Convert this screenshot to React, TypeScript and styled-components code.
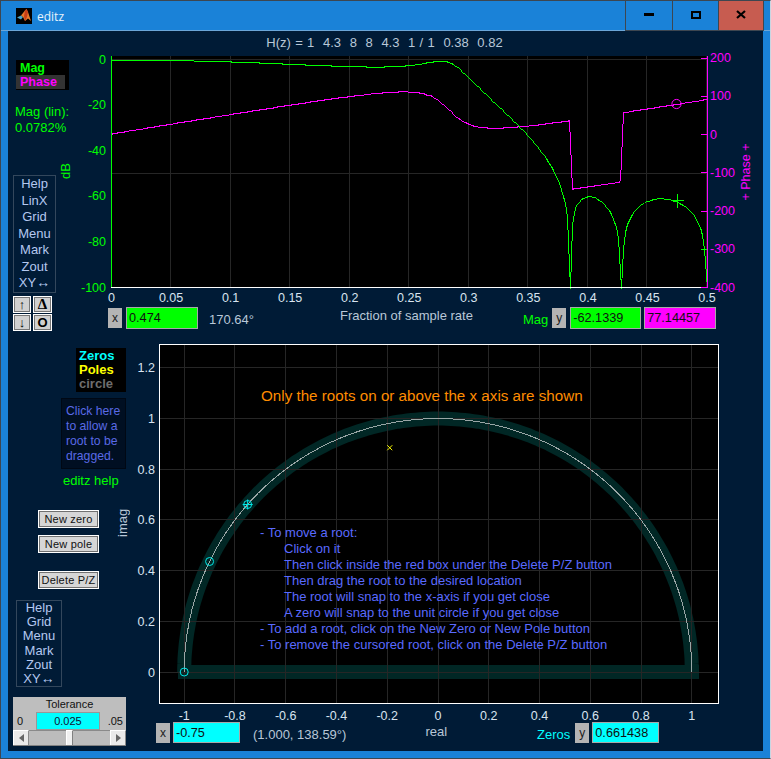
import React from 'react';
import styled, { createGlobalStyle } from 'styled-components';

const GlobalStyle = createGlobalStyle`
  html, body {
    margin: 0;
    padding: 0;
    background: #1a82d8;
  }
  * {
    box-sizing: border-box;
  }
`;

const FONT = '"Liberation Sans", Arial, sans-serif';

const Window = styled.div`
  width: 771px;
  height: 759px;
  display: flex;
  flex-direction: column;
  background: #1a82d8;
  border: 1px solid #3d4650;
  border-right-color: #c9d6e2;
  font-family: ${FONT};
  font-size: 12px;
  overflow: hidden;
`;

const TitleBar = styled.div`
  height: 30px;
  flex: none;
  display: flex;
  align-items: flex-start;
  padding-left: 15px;
  border-bottom: 1px solid #6ba6d8;
`;

const AppName = styled.span`
  margin: 7px 0 0 5px;
  font-family: "Open Sans", sans-serif;
  font-size: 12px;
  color: #e8f2fb;
`;

const WindowControls = styled.div`
  margin-left: auto;
  margin-right: 6px;
  display: flex;
  height: 30px;
  border: 1px solid #3d4650;
  border-top: none;
`;

const ControlButton = styled.div<{ $close?: boolean; $w: number }>`
  width: ${p => p.$w}px;
  display: flex;
  align-items: center;
  justify-content: center;
  background: ${p => (p.$close ? '#c75c50' : '#1a82d8')};
  border-left: 1px solid #3d4650;
  padding-bottom: 2px;
  &:first-child {
    border-left: none;
  }
`;

const Figure = styled.div`
  width: 755px;
  height: 720px;
  margin-left: 7px;
  flex: none;
  background: #001b36;
  display: flex;
  flex-direction: column;
`;

const FilterTitle = styled.div`
  height: 19px;
  flex: none;
  padding-top: 4px;
  text-align: center;
  color: #b9c8d8;
  font-size: 13px;
  line-height: 15px;
  white-space: pre;
  word-spacing: 0.7px;
  margin-right: 2px;
`;

const TopSection = styled.div`
  display: flex;
  height: 290px;
  flex: none;
`;

const TopSidebar = styled.div`
  width: 65px;
  flex: none;
  padding-left: 5px;
  display: flex;
  flex-direction: column;
`;

const Legend = styled.div`
  width: 53px;
  height: 30px;
  margin: 10px 0 0 3px;
  background: #000;
  display: flex;
  flex-direction: column;
  font-weight: bold;
  font-size: 12.5px;
  line-height: 14px;
  padding-top: 1px;
`;

const LegendItem = styled.span<{ $color: string; $back?: string }>`
  display: block;
  width: 49px;
  height: 14px;
  padding-left: 4px;
  color: ${p => p.$color};
  background: ${p => p.$back || 'transparent'};
`;

const Readout = styled.div`
  margin: 14px 0 0 2px;
  color: #00ff00;
  font-size: 13px;
  line-height: 16px;
  white-space: nowrap;
`;

const VerticalLabel = styled.span<{ $color: string }>`
  writing-mode: vertical-rl;
  transform: rotate(180deg);
  color: ${p => p.$color};
  font-size: 13px;
  line-height: 14px;
`;

const DbHolder = styled.div`
  height: 14px;
  margin: 29px 0 0 46px;
  display: flex;
`;

const Menu = styled.div<{ $row: number; $w: number }>`
  width: ${p => p.$w}px;
  border: 1px solid #33475c;
  display: flex;
  flex-direction: column;
  align-items: center;
  color: #b4c8f0;
  font-size: 13px;
  line-height: ${p => p.$row}px;
`;

const TopMenu = styled(Menu)`
  margin-top: -4px;
`;

const LongArrow = styled.span`
  font-size: 14px;
  line-height: 0;
`;

const ArrowGrid = styled.div`
  display: grid;
  grid-template-columns: 18px 19px;
  grid-auto-rows: 17px;
  column-gap: 2px;
  row-gap: 1px;
  margin-top: 3px;
  width: 40px;
`;

const ArrowButton = styled.div<{ $serif?: boolean }>`
  background: #d0d0d0;
  border: 1px solid #fff;
  outline: 1px solid #777;
  outline-offset: -2px;
  display: flex;
  align-items: center;
  justify-content: center;
  color: #000;
  font-family: ${p => (p.$serif ? '"Liberation Serif", serif' : FONT)};
  font-weight: bold;
  font-size: ${p => (p.$serif ? 15 : 13)}px;
  line-height: 1;
`;

const PlotColumn = styled.div`
  display: flex;
  flex-direction: column;
  flex: 1;
  min-width: 0;
`;

const PlotSvg = styled.svg`
  display: block;
  flex: none;
`;

const ReadoutRow = styled.div<{ $pad: number; $h: number }>`
  display: flex;
  align-items: center;
  padding-left: ${p => p.$pad}px;
  height: ${p => p.$h}px;
  flex: none;
  white-space: nowrap;
`;

const AxisBadge = styled.div<{ $left?: number }>`
  width: 14px;
  height: 20px;
  margin-left: ${p => p.$left || 0}px;
  background: #b4b4b4;
  color: #202020;
  display: flex;
  align-items: center;
  justify-content: center;
  font-size: 12px;
  flex: none;
`;

const ValueBox = styled.div<{ $color: string; $w: number; $h: number; $left: number }>`
  width: ${p => p.$w}px;
  height: ${p => p.$h}px;
  margin-left: ${p => p.$left}px;
  background: ${p => p.$color};
  border: 1px solid #a8a8a8;
  color: #111;
  font-size: 12.7px;
  padding-left: 2px;
  display: flex;
  align-items: center;
  flex: none;
`;

const PlainText = styled.span<{ $left: number; $color?: string; $up?: number }>`
  margin-left: ${p => p.$left}px;
  color: ${p => p.$color || '#b9c8d8'};
  font-size: 13px;
  transform: translateY(${p => p.$up || 0}px);
`;

const BottomSection = styled.div`
  display: flex;
  flex: 1;
`;

const BottomSidebar = styled.div`
  width: 124px;
  flex: none;
  display: flex;
  flex-direction: column;
`;

const RootLegend = styled.div`
  width: 50px;
  height: 44px;
  margin: 8px 0 0 68px;
  padding: 1px 0 0 3px;
  background: #000;
  font-weight: bold;
  font-size: 13px;
  line-height: 14px;
`;

const RootLegendItem = styled.div<{ $color: string }>`
  color: ${p => p.$color};
`;

const DragHint = styled.div`
  width: 65px;
  height: 71px;
  margin: 6px 0 0 53px;
  background: #000f22;
  border: 1px solid #000814;
  color: #5a6ae6;
  padding: 5px 0 0 4px;
  font-size: 12.2px;
  line-height: 15px;
  white-space: nowrap;
`;

const HelpLink = styled.div`
  margin: 4px 0 0 55px;
  color: #00ff00;
  font-size: 13px;
`;

const ButtonArea = styled.div`
  display: flex;
  margin: 22px 0 0 30px;
`;

const ButtonStack = styled.div`
  display: flex;
  flex-direction: column;
  width: 61px;
`;

const PushButton = styled.div<{ $gap: number }>`
  height: 18px;
  margin-top: ${p => p.$gap}px;
  background: #d6d6d6;
  border: 1px solid #fff;
  outline: 1px solid #707070;
  outline-offset: -2px;
  display: flex;
  align-items: center;
  justify-content: center;
  color: #111;
  font-size: 11px;
  letter-spacing: 0.2px;
`;

const ImagHolder = styled.div`
  margin-left: 17px;
  height: 27px;
  display: flex;
`;

const BottomMenu = styled(Menu)`
  margin: 11px 0 0 8px;
`;

const TolerancePanel = styled.div`
  width: 113px;
  height: 49px;
  margin: 10px 0 0 5px;
  background: #bebebe;
  display: flex;
  flex-direction: column;
  color: #111;
  font-size: 11px;
`;

const ToleranceTitle = styled.div`
  height: 15px;
  line-height: 14px;
  text-align: center;
  flex: none;
`;

const ToleranceRow = styled.div`
  height: 18px;
  flex: none;
  display: flex;
  align-items: center;
  padding: 0 3px 0 4px;
  justify-content: space-between;
`;

const ToleranceValue = styled.div`
  width: 64px;
  height: 18px;
  margin-left: 5px;
  background: #00ffff;
  border: 1px solid #989898;
  text-align: center;
  line-height: 17px;
  font-size: 11px;
  color: #113;
`;

const ScrollBar = styled.div`
  height: 16px;
  flex: none;
  display: flex;
  background: #bcbcbc;
  border-bottom: 1px solid #808080;
`;

const ScrollArrow = styled.div<{ $dir: 'left' | 'right' }>`
  width: 16px;
  flex: none;
  background: #eaeaea;
  border-right: 1px solid #8a8a8a;
  border-left: 1px solid #fff;
  border-top: 1px solid #fff;
  display: flex;
  align-items: center;
  justify-content: center;
  &::after {
    content: '';
    width: 0;
    height: 0;
    border-top: 4px solid transparent;
    border-bottom: 4px solid transparent;
    ${p => (p.$dir === 'left' ? 'border-right: 5px solid #666;' : 'border-left: 5px solid #666;')}
  }
`;

const ScrollTrack = styled.div<{ $w: number }>`
  width: ${p => p.$w}px;
  flex: none;
  border-top: 1px solid #8a8a8a;
`;

const ScrollThumb = styled.div`
  width: 7px;
  flex: none;
  background: #f0f0f0;
  border-left: 1px solid #fff;
  border-right: 1px solid #808080;
  border-top: 1px solid #fff;
`;

const Tick = styled.text<{ $color?: string }>`
  font-family: ${FONT};
  font-size: 12.5px;
  fill: ${p => p.$color || '#d8e4f0'};
`;

const Note = styled.text<{ $color: string; $size: number }>`
  font-family: ${FONT};
  font-size: ${p => p.$size}px;
  fill: ${p => p.$color};
`;

const Crisp = styled.g`
  shape-rendering: crispEdges;
`;

// frequency response of H(z) = N(z) / D(z), both in powers of z
const NUM = [1, 4.3, 8, 8, 4.3, 1];
const DEN = [1, 0.38, 0.82];

const polyAt = (c: number[], w: number): [number, number] => {
  let re = 0;
  let im = 0;
  c.forEach((a, i) => {
    const p = c.length - 1 - i;
    re += a * Math.cos(p * w);
    im += a * Math.sin(p * w);
  });
  return [re, im];
};

const response = (f: number) => {
  const w = 2 * Math.PI * f;
  const [nr, ni] = polyAt(NUM, w);
  const [dr, di] = polyAt(DEN, w);
  const mag = Math.hypot(nr, ni) / Math.hypot(dr, di);
  const phase = ((Math.atan2(ni, nr) - Math.atan2(di, dr)) * 180) / Math.PI;
  const wrapped = ((phase + 540) % 360) - 180;
  return { mag, phase: wrapped };
};

const NOTCH_A = Math.acos(-0.75) / (2 * Math.PI);
const NOTCH_B = Math.acos(-0.9) / (2 * Math.PI);

const fx = (f: number) => 111 + f * 1191;
const dbY = (db: number) => 59.5 + -db * 2.28;
const phY = (ph: number) => 287 - (ph + 400) * 0.3825;

const samples = Array.from({ length: 257 }, (_, i) => i / 512)
  .concat([NOTCH_A, NOTCH_B])
  .sort((a, b) => a - b);

const peak = Math.max(...samples.map(f => response(f).mag));

const magPoints = samples
  .map(f => {
    const db = 20 * Math.log10(Math.max(response(f).mag / peak, 1e-9));
    return `${Math.round(fx(f)) + 0.5},${Math.round(dbY(Math.max(db, -100))) + 0.5}`;
  })
  .join(' ');

const phasePoints = samples
  .filter(f => f !== NOTCH_A && f !== NOTCH_B && f < 0.5)
  .concat([0.4999])
  .map(f => `${Math.round(fx(f)) + 0.5},${Math.round(phY(response(f).phase) - 0.5) + 0.5}`)
  .join(' ');

const rx = (v: number) => 438 + v * 253.8;
const ry = (v: number) => 672 - v * 253.4;

const circleArc = Array.from({ length: 181 }, (_, i) => {
  const a = (Math.PI * (180 - i)) / 180;
  return `${rx(Math.cos(a)).toFixed(1)},${ry(Math.sin(a)).toFixed(1)}`;
}).join(' ');

const TOP_X_TICKS = ['0', '0.05', '0.1', '0.15', '0.2', '0.25', '0.3', '0.35', '0.4', '0.45', '0.5'];
const DB_TICKS = [0, -20, -40, -60, -80, -100];
const PHASE_TICKS = [200, 100, 0, -100, -200, -300, -400];
const REAL_TICKS = [-1, -0.8, -0.6, -0.4, -0.2, 0, 0.2, 0.4, 0.6, 0.8, 1];
const IMAG_TICKS = [0, 0.2, 0.4, 0.6, 0.8, 1, 1.2];

const HELP_LINES: [number, string][] = [
  [260, '- To move a root:'],
  [284, 'Click on it'],
  [284, 'Then click inside the red box under the Delete P/Z button'],
  [284, 'Then drag the root to the desired location'],
  [284, 'The root will snap to the x-axis if you get close'],
  [284, 'A zero will snap to the unit circle if you get close'],
  [260, '- To add a root, click on the New Zero or New Pole button'],
  [260, '- To remove the cursored root, click on the Delete P/Z button'],
];

const FreqPlot: React.FC = () => (
  <PlotSvg width={690} height={257} viewBox="73 50 690 257">
    <rect x={111} y={56} width={596} height={231} fill="#000" />
    <Crisp>
      {TOP_X_TICKS.map((_, i) => (
        <line key={i} x1={fx(i * 0.05)} x2={fx(i * 0.05)} y1={56} y2={287} stroke="#262626" />
      ))}
      <line x1={111} x2={707} y1={59.5} y2={59.5} stroke="#262626" />
      <line x1={111} x2={707} y1={173.5} y2={173.5} stroke="#262626" />
      <polyline points={phasePoints} fill="none" stroke="#ff00ff" />
      <polyline points={magPoints} fill="none" stroke="#00ff00" />
      <line x1={111.5} x2={111.5} y1={56} y2={288} stroke="#00ff00" />
      <line x1={111} x2={707} y1={287.5} y2={287.5} stroke="#fff" />
      <line x1={707.5} x2={707.5} y1={56} y2={288} stroke="#ff00ff" />
      {PHASE_TICKS.map(t => (
        <line key={t} x1={701} x2={707} y1={Math.round(phY(t)) + 0.5} y2={Math.round(phY(t)) + 0.5} stroke="#ff00ff" />
      ))}
      <line x1={701} x2={707} y1={249.5} y2={249.5} stroke="#00ff00" />
      <line x1={671} x2={684} y1={200.5} y2={200.5} stroke="#00ff00" />
      <line x1={677.5} x2={677.5} y1={194} y2={208} stroke="#00ff00" />
    </Crisp>
    <circle cx={676.5} cy={104} r={4.6} fill="none" stroke="#ff00ff" />
    {DB_TICKS.map(t => (
      <Tick key={t} x={106} y={dbY(t) + 4} textAnchor="end" $color="#00ff00">
        {t}
      </Tick>
    ))}
    {PHASE_TICKS.map(t => (
      <Tick key={t} x={710} y={phY(t) + 4.5} $color="#ff00ff">
        {t}
      </Tick>
    ))}
    {TOP_X_TICKS.map((t, i) => (
      <Tick key={t} x={fx(i * 0.05) + 0.5} y={302} textAnchor="middle">
        {t}
      </Tick>
    ))}
    <Tick x={750} y={172} textAnchor="middle" transform="rotate(-90 750 172)" $color="#ff00ff">
      + Phase +
    </Tick>
  </PlotSvg>
);

const RootPlot: React.FC = () => (
  <PlotSvg width={631} height={382} viewBox="132 340 631 382">
    <rect x={159.5} y={344} width={559} height={359} fill="#000" />
    <polyline
      points={`${circleArc} ${rx(1)},${ry(0)}`}
      fill="none"
      stroke="#012725"
      strokeWidth={14}
    />
    <rect x={178} y={665} width={521} height={14} fill="#012725" />
    <Crisp>
      {REAL_TICKS.map(t => (
        <line key={t} x1={rx(t)} x2={rx(t)} y1={344} y2={703} stroke="#262626" />
      ))}
      {IMAG_TICKS.map(t => (
        <line key={t} x1={160} x2={718} y1={ry(t)} y2={ry(t)} stroke="#262626" />
      ))}
      <rect x={159.5} y={344.5} width={559} height={358.5} fill="none" stroke="#fff" />
      <polyline points={circleArc} fill="none" stroke="#9aa6a6" strokeWidth={1} />
    </Crisp>
    <g fill="none" stroke="#00e8e8">
      <circle cx={rx(-1)} cy={ry(0)} r={4} />
      <circle cx={rx(-0.9)} cy={ry(0.436)} r={4} />
      <circle cx={rx(-0.75)} cy={ry(0.661)} r={4} />
      <path d={`M${rx(-0.75) - 5} ${ry(0.661)}h10M${rx(-0.75)} ${ry(0.661) - 5}v10`} />
    </g>
    <path
      d={`M${rx(-0.19) - 2.5} ${ry(0.885) - 2.5}l5 5M${rx(-0.19) + 2.5} ${ry(0.885) - 2.5}l-5 5`}
      stroke="#ffff00"
      fill="none"
    />
    <Note x={261} y={401} $color="#ff8c00" $size={15.2}>
      Only the roots on or above the x axis are shown
    </Note>
    {HELP_LINES.map(([x, line], i) => (
      <Note key={line} x={x} y={537 + i * 16} $color="#5a6aff" $size={13}>
        {line}
      </Note>
    ))}
    {REAL_TICKS.map(t => (
      <Tick key={t} x={rx(t)} y={720} textAnchor="middle">
        {t}
      </Tick>
    ))}
    {IMAG_TICKS.map(t => (
      <Tick key={t} x={155} y={ry(t) + 4.5} textAnchor="end">
        {t}
      </Tick>
    ))}
  </PlotSvg>
);

const IconFrame = styled.svg`
  margin-top: 7px;
  flex: none;
`;

const MatlabIcon: React.FC = () => (
  <IconFrame width="16" height="16" viewBox="0 0 16 16">
    <rect width="16" height="16" fill="#000" />
    <path d="M1 9.5 5 7.5 7 9 5 11.5Z" fill="#4aa3c8" />
    <path d="M5 7.5 9 2.5 10.5 1 12 4 15 13 12 10.5 9 13 7 9Z" fill="#e8782a" />
    <path d="M9 2.5 10.5 1 12 4 11 9 9 13 8 8Z" fill="#c83e18" />
  </IconFrame>
);

const App: React.FC = () => (
  <Window>
    <GlobalStyle />
    <TitleBar>
      <MatlabIcon />
      <AppName>editz</AppName>
      <WindowControls>
        <ControlButton $w={46}>
          <svg width="10" height="3" viewBox="0 0 10 3"><rect width="10" height="3" fill="#000" /></svg>
        </ControlButton>
        <ControlButton $w={46}>
          <svg width="10" height="8" viewBox="0 0 10 8"><rect x="1" y="1" width="8" height="6" fill="none" stroke="#000" strokeWidth="2" /></svg>
        </ControlButton>
        <ControlButton $w={45} $close>
          <svg width="10" height="9" viewBox="0 0 10 9"><path d="M1 1 9 8M9 1 1 8" stroke="#000" strokeWidth="2.2" fill="none" /></svg>
        </ControlButton>
      </WindowControls>
    </TitleBar>
    <Figure>
      <FilterTitle>{'H(z) = 1  4.3  8  8  4.3  1 / 1  0.38  0.82'}</FilterTitle>
      <TopSection>
        <TopSidebar>
          <Legend>
            <LegendItem $color="#00ff00">Mag</LegendItem>
            <LegendItem $color="#ff00ff" $back="#333">Phase</LegendItem>
          </Legend>
          <Readout>
            Mag (lin):
            <br />
            0.0782%
          </Readout>
          <DbHolder>
            <VerticalLabel $color="#00ff00">dB</VerticalLabel>
          </DbHolder>
          <TopMenu $row={16.5} $w={43}>
            {['Help', 'LinX', 'Grid', 'Menu', 'Mark', 'Zout'].map(m => (
              <span key={m}>{m}</span>
            ))}
            <span>XY<LongArrow>↔</LongArrow></span>
          </TopMenu>
          <ArrowGrid>
            <ArrowButton>↑</ArrowButton>
            <ArrowButton $serif>Δ</ArrowButton>
            <ArrowButton>↓</ArrowButton>
            <ArrowButton>O</ArrowButton>
          </ArrowGrid>
        </TopSidebar>
        <PlotColumn>
          <FreqPlot />
          <ReadoutRow $pad={35} $h={22}>
            <AxisBadge>x</AxisBadge>
            <ValueBox $color="#00ff00" $w={72} $h={22} $left={4}>0.474</ValueBox>
            <PlainText $left={11} $up={1}>170.64°</PlainText>
            <PlainText $left={86} $up={-3}>Fraction of sample rate</PlainText>
            <PlainText $left={50} $color="#00ff00" $up={1}>Mag</PlainText>
            <AxisBadge $left={4}>y</AxisBadge>
            <ValueBox $color="#00ff00" $w={71} $h={22} $left={4}>-62.1339</ValueBox>
            <ValueBox $color="#ff00ff" $w={72} $h={22} $left={3}>77.14457</ValueBox>
          </ReadoutRow>
        </PlotColumn>
      </TopSection>
      <BottomSection>
        <BottomSidebar>
          <RootLegend>
            <RootLegendItem $color="#00ffff">Zeros</RootLegendItem>
            <RootLegendItem $color="#ffff00">Poles</RootLegendItem>
            <RootLegendItem $color="#6e6e6e">circle</RootLegendItem>
          </RootLegend>
          <DragHint>
            Click here
            <br />
            to allow a
            <br />
            root to be
            <br />
            dragged.
          </DragHint>
          <HelpLink>editz help</HelpLink>
          <ButtonArea>
            <ButtonStack>
              <PushButton $gap={0}>New zero</PushButton>
              <PushButton $gap={7}>New pole</PushButton>
              <PushButton $gap={18}>Delete P/Z</PushButton>
            </ButtonStack>
            <ImagHolder>
              <VerticalLabel $color="#b9c8d8">imag</VerticalLabel>
            </ImagHolder>
          </ButtonArea>
          <BottomMenu $row={14.2} $w={46}>
            {['Help', 'Grid', 'Menu', 'Mark', 'Zout'].map(m => (
              <span key={m}>{m}</span>
            ))}
            <span>XY<LongArrow>↔</LongArrow></span>
          </BottomMenu>
          <TolerancePanel>
            <ToleranceTitle>Tolerance</ToleranceTitle>
            <ToleranceRow>
              <span>0</span>
              <ToleranceValue>0.025</ToleranceValue>
              <span>.05</span>
            </ToleranceRow>
            <ScrollBar>
              <ScrollArrow $dir="left" />
              <ScrollTrack $w={37} />
              <ScrollThumb />
              <ScrollTrack $w={37} />
              <ScrollArrow $dir="right" />
            </ScrollBar>
          </TolerancePanel>
        </BottomSidebar>
        <PlotColumn>
          <RootPlot />
          <ReadoutRow $pad={24} $h={21}>
            <AxisBadge>x</AxisBadge>
            <ValueBox $color="#00ffff" $w={67} $h={21} $left={3}>-0.75</ValueBox>
            <PlainText $left={13} $up={2}>(1.000, 138.59°)</PlainText>
            <PlainText $left={79} $up={-1}>real</PlainText>
            <PlainText $left={90} $color="#00ffff" $up={2}>Zeros</PlainText>
            <AxisBadge $left={5}>y</AxisBadge>
            <ValueBox $color="#00ffff" $w={67} $h={21} $left={3}>0.661438</ValueBox>
          </ReadoutRow>
        </PlotColumn>
      </BottomSection>
    </Figure>
  </Window>
);

export default App;
